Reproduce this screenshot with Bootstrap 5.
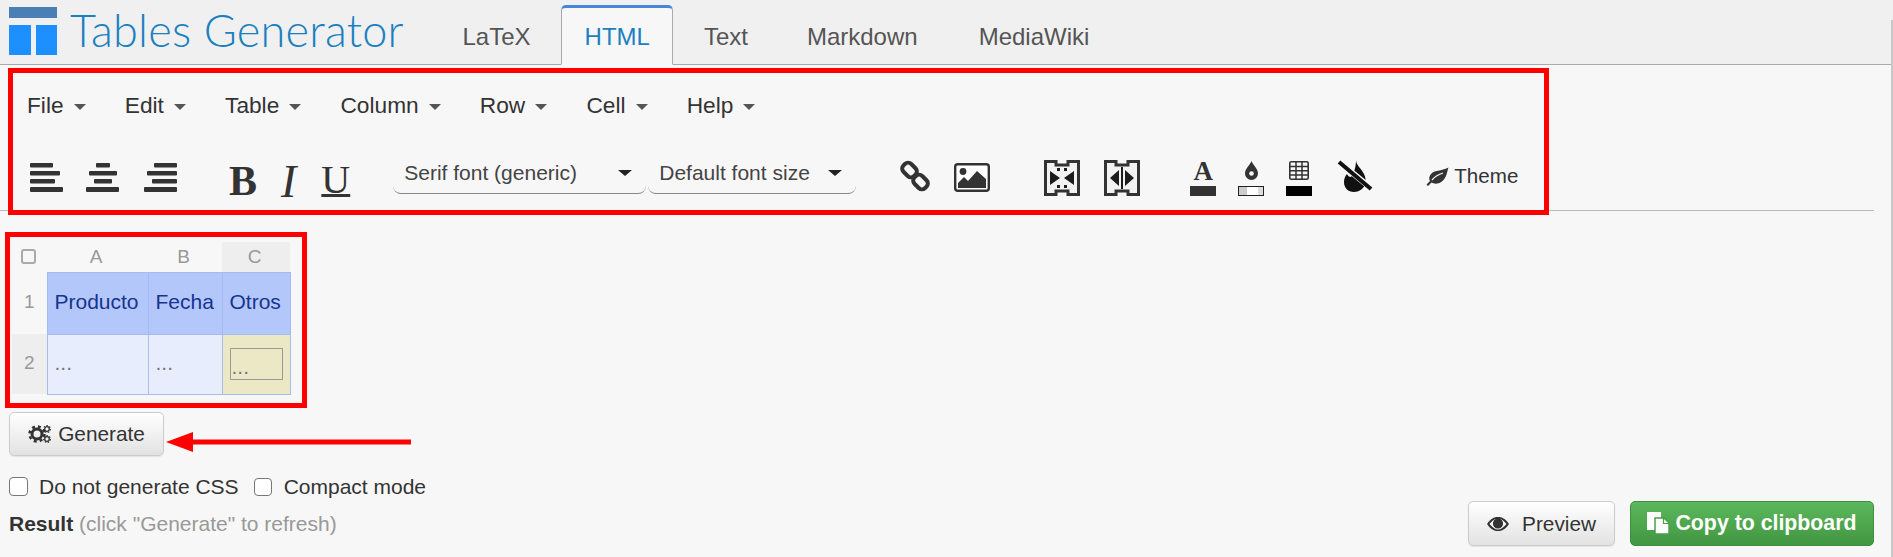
<!doctype html>
<html lang="en">
<head>
<meta charset="utf-8">
<title>Tables Generator</title>
<link href="https://cdn.jsdelivr.net/npm/bootstrap@5.3.0/dist/css/bootstrap.min.css" rel="stylesheet">
<style>
html,body{height:557px;overflow:hidden}
body{background:#f0f0f0;font-family:"Liberation Sans",Arial,sans-serif;color:#333;font-size:21px}
.shell{height:557px}
.edge{width:2px;margin-top:20px;background:#c8c8c8;flex:none}
.pane{flex:1 1 auto;background:#f7f7f7;min-width:0;position:relative;overflow:hidden}
.topbar{height:65px;background:#f0f0f0;border-bottom:1px solid #aaa;padding-left:9px}
.logo-svg{width:49px;height:48px;margin-top:7px;flex:none}
.brand{font-family:Lato,sans-serif;font-weight:300;font-size:45.1px;line-height:48px;color:#1b80c0;margin:6px 0 0 12px;width:335px;white-space:nowrap;letter-spacing:.2px}
.tabrow{margin-left:33px;gap:6px;height:65px}
.tabitem{font-size:24px;color:#555;padding:0 23.5px;height:60px;margin-top:5px;line-height:57px;border:1px solid transparent;border-top-width:3px;margin-bottom:-1px;white-space:nowrap}
.tabitem.on{background:#f7f7f7;color:#1b80c0;border-color:#4a86d8 #aaa #f7f7f7;border-radius:5px 5px 0 0;height:60px;padding:0 22.5px}
.tab-md{margin-left:4px}.tab-mw{margin-left:6px}
.tools{height:146px;border-bottom:1px solid #bbb;margin-right:17px;padding-left:27px;position:relative}
.menuline{height:80px;gap:39.2px;font-size:22.7px;color:#333}
.menuline .dropdown-toggle::after{margin-left:10px;border-top:6px solid #555;border-right:6px solid transparent;border-left:6px solid transparent;border-bottom:0;vertical-align:3px}
.iconline{height:44px;margin:15px 0 0 3px}
.ink{color:#333;display:block;flex:none}
.alg{width:33px;height:29px;margin-top:3px}
.m-alg{margin-left:23px}.m-alg2{margin-left:25px}
.gl{font-family:"Liberation Serif",serif;font-size:42px;line-height:44px;color:#333;margin-top:-1px}
.gl-b{font-weight:700;margin-left:52px}
.gl-i{font-style:italic;margin-left:24px;font-size:46px;line-height:40px;margin-top:2px}
.gl-u{margin-left:25px;text-decoration:underline;text-decoration-thickness:2.5px;text-underline-offset:1px;font-size:40px;line-height:42px}
.pick{height:34px;font-size:21px;line-height:26px;border-bottom:1px solid #888;border-radius:0 0 8px 8px;padding:0 14px 7px 11px;color:#444;margin-top:0}
.pick-a{width:253px;margin-left:43px}
.pick-b{width:208px;margin-left:2px}
.arrowdown{width:0;height:0;border-top:6px solid #222;border-left:7px solid transparent;border-right:7px solid transparent}
.chain{width:32px;height:32px;margin-left:43px}
.pic{width:36px;height:29px;margin-left:23px;margin-top:3px}
.frame{width:36px;height:36px}
.m-merge{margin-left:54px}.m-split{margin-left:24px}
.swatchbox{width:26px;height:36px}
.swatch{height:10px;width:26px;margin-top:auto}
.sw-a{background:#333}
.sw-b{border:1px solid #222;background:linear-gradient(90deg,#ccc 0 35%,#fff 35% 80%,#ddd 80%)}
.sw-c{background:#000}
.m-sw1{margin-left:50px}.m-sw2{margin-left:22px}
.letter-a{font-family:"Liberation Serif",serif;font-weight:700;font-size:27px;line-height:22px;text-align:center;color:#333}
.dropico{width:13px;height:19px;margin:1px auto 0}
.gridico{width:20px;height:19px;margin:1px auto 0}
.flame{width:37px;height:32px;margin-left:25px;margin-top:0}
.theme{margin-left:52px;font-size:20.6px;gap:5px;margin-top:1px}
.leaf{width:23px;height:19px}
.redbox{position:absolute;border:5px solid #f00;pointer-events:none}
.rb-tools{left:8px;top:68px;width:1541px;height:147px}
.tablewrap{margin:21px 0 0 5px;width:302px;height:176px;border:5px solid #f00;padding:5px 0 0 2px}
.sheet{table-layout:fixed;width:278px;border-collapse:collapse;font-size:21px}
.sheet th{font-weight:400;color:#999;text-align:center;padding:0}
.sheet .hd{height:30px;font-size:19px;padding-right:3px}
.sheet .rowh{font-size:19px;padding-bottom:2px}
.sheet .act{background:#eee}
.sheet td{border:1px solid #a8bde8;padding:0 0 3px 7px;white-space:nowrap}
.sheet .r1{height:62px;background:#b4c7fb;color:#15358f;border-color:#a4baf2}
.sheet .r2{height:60px;background:#e7edfd;color:#777}
.sheet .sel{background:#ece8c6;padding:0 7px;color:#777}
.selbox{border:1px solid #999;height:32px;line-height:36px;padding-left:1px}
.corner{width:15px;height:15px;border:2px solid #aaa;border-radius:3px;display:inline-block;vertical-align:-1px}
.genrow{margin:4px 0 0 9px}
.grad{background:linear-gradient(#fff,#e2e2e2);border:1px solid #ccc;color:#333;font-size:20.8px;border-radius:5px;box-shadow:0 1px 1px rgba(0,0,0,.08);height:43px;padding:0;display:flex;align-items:center;justify-content:center}
.gen{width:155px;gap:7px;height:44px}
.gears{width:23px;height:20px}
.redarrow{width:246px;height:20px;margin:20px 0 0 2px}
.opts{margin:21px 0 0 9px;height:19px}
.tick{width:19px;height:19px;border:1.5px solid #777;border-radius:4px;margin:0;background:#fff;flex:none;appearance:none;display:block}
.optlabel{font-size:21px;line-height:19px;white-space:nowrap;color:#333}
.tl1{margin-left:11px}.tick2{margin-left:15px;width:18px;height:18px}.tl2{margin-left:12px}
.resultrow{margin:5px 17px 0 9px;height:45px}
.muted-note{color:#999;font-weight:400}
.res{font-size:21px}
.prev{width:147px;height:45px;gap:13px}
.eye{width:22px;height:14px}
.copy{width:244px;height:45px;margin-left:15px;background:linear-gradient(#5cb85c,#419641);border:1px solid #3e8f3e;color:#fff;font-weight:700;font-size:21.3px;border-radius:5px;gap:5px;padding:0}
.copyico{width:23px;height:23px}
</style>
</head>
<body>
<div class="shell d-flex">
<div class="pane">
  <header class="topbar d-flex">
    <svg class="logo-svg" viewBox="0 0 49 48"><rect x="0" y="0" width="48" height="11" fill="#4a7fb5"/><rect x="0" y="18" width="22" height="30" fill="#1e8fff"/><rect x="27" y="18" width="21" height="30" fill="#1e8fff"/></svg>
    <div class="brand">Tables Generator</div>
    <nav class="tabrow d-flex">
      <div class="tabitem">LaTeX</div>
      <div class="tabitem on">HTML</div>
      <div class="tabitem">Text</div>
      <div class="tabitem tab-md">Markdown</div>
      <div class="tabitem tab-mw">MediaWiki</div>
    </nav>
  </header>

  <section class="tools">
    <div class="menuline d-flex align-items-center">
      <span class="dropdown-toggle">File</span>
      <span class="dropdown-toggle">Edit</span>
      <span class="dropdown-toggle">Table</span>
      <span class="dropdown-toggle">Column</span>
      <span class="dropdown-toggle">Row</span>
      <span class="dropdown-toggle">Cell</span>
      <span class="dropdown-toggle">Help</span>
    </div>
    <div class="iconline d-flex align-items-start">
      <svg class="ink alg" viewBox="0 0 33 29" fill="currentColor"><rect y="0" width="23" height="4.5" rx="1"/><rect y="8" width="30" height="4.5" rx="1"/><rect y="16" width="25" height="4.5" rx="1"/><rect y="24" width="33" height="5" rx="1"/></svg>
      <svg class="ink alg m-alg" viewBox="0 0 33 29" fill="currentColor"><rect x="10" y="0" width="14" height="4.5" rx="1"/><rect x="3" y="8" width="28" height="4.5" rx="1"/><rect x="8" y="16" width="18" height="4.5" rx="1"/><rect y="24" width="33" height="5" rx="1"/></svg>
      <svg class="ink alg m-alg2" viewBox="0 0 33 29" fill="currentColor"><rect x="10" y="0" width="23" height="4.5" rx="1"/><rect x="3" y="8" width="30" height="4.5" rx="1"/><rect x="8" y="16" width="25" height="4.5" rx="1"/><rect y="24" width="33" height="5" rx="1"/></svg>
      <span class="gl gl-b">B</span>
      <span class="gl gl-i">I</span>
      <span class="gl gl-u">U</span>
      <div class="pick pick-a d-flex justify-content-between align-items-center"><span>Serif font (generic)</span><i class="arrowdown"></i></div>
      <div class="pick pick-b d-flex justify-content-between align-items-center"><span>Default font size</span><i class="arrowdown"></i></div>
      <svg class="ink chain" viewBox="0 0 32 32" fill="none" stroke="currentColor" stroke-width="4"><rect x="3" y="4.500" width="15" height="11" rx="4.500" transform="rotate(45 10.500 10)"/><rect x="14" y="16.500" width="15" height="11" rx="4.500" transform="rotate(45 21.500 22)"/></svg>
      <svg class="ink pic" viewBox="0 0 36 29"><rect x="1.2" y="1.2" width="33.6" height="26.6" rx="2.5" fill="#fff" stroke="currentColor" stroke-width="2.4"/><circle cx="9" cy="8.5" r="3.4" fill="currentColor"/><path d="M4 25v-5l6-6 4 4 9-10 9 8v9z" fill="currentColor"/></svg>
      <svg class="ink frame m-merge" viewBox="0 0 36 36"><path d="M1.5 1.5H12V5H24V1.5H34.5V34.5H24V31H12V34.5H1.5Z" fill="#f2f2f2" stroke="currentColor" stroke-width="3"/><path d="M6 11l10 7-10 7zM30 11l-10 7 10 7z" fill="#1c1c1c"/><path d="M13 8h3v3h-3zM20 8h3v3h-3zM13 25h3v3h-3zM20 25h3v3h-3z" fill="#1c1c1c"/></svg>
      <svg class="ink frame m-split" viewBox="0 0 36 36"><path d="M1.5 1.5H12V5H24V1.5H34.5V34.5H24V31H12V34.5H1.5Z" fill="#f2f2f2" stroke="currentColor" stroke-width="3"/><path d="M15 10v16L6 18zM21 10v16l9-8z" fill="#1c1c1c"/><rect x="17" y="7" width="2" height="22" fill="#1c1c1c"/></svg>
      <div class="swatchbox d-flex flex-column m-sw1"><div class="letter-a">A</div><div class="swatch sw-a"></div></div>
      <div class="swatchbox d-flex flex-column m-sw2"><svg class="ink dropico" viewBox="0 0 13 19"><path d="M6.5 0C8 4 13 7.500 13 12.500A6.500 6.500 0 0 1 0 12.500C0 7.500 5 4 6.500 0z" fill="currentColor"/><circle cx="6.500" cy="12.500" r="2.300" fill="#f7f7f7"/></svg><div class="swatch sw-b"></div></div>
      <div class="swatchbox d-flex flex-column m-sw2"><svg class="ink gridico" viewBox="0 0 20 19" fill="none" stroke="currentColor" stroke-width="1.500"><rect x=".8" y=".8" width="18.400" height="17.400" rx="1.500" stroke-width="1.600"/><path d="M.8 5.500h18.400M.8 9.700h18.400M.8 14h18.400M7 .8v17.400M13 .8v17.400"/></svg><div class="swatch sw-c"></div></div>
      <svg class="flame" viewBox="0 0 37 32"><path d="M19 0c0 5 5 8 8 14 2 4 2 8 1 11-2 4-6 7-11 7-6 0-10-4-10-10 0-3 1-6 3-8 1 2 2 3 4 3 3-4 5-10 5-17z" fill="#111"/><path d="M1 1l34 28" stroke="#f7f7f7" stroke-width="6"/><path d="M2 2l32 27" stroke="#111" stroke-width="4"/></svg>
      <div class="theme d-flex align-items-center"><svg class="ink leaf" viewBox="0 0 23 19"><path d="M22.500 0.500C17 4 9 2.500 5 7c-2 2.300-2.200 5-1 7L.5 17.500 2 19l3.500-3.500c3 2 8 1.500 11.500-2 4-4 4-9 5.500-13z" fill="currentColor"/><path d="M6 13c3-3.500 6-5.500 11-7" stroke="#f7f7f7" stroke-width="1.200" fill="none"/></svg><span>Theme</span></div>
    </div>
  </section>
  <div class="redbox rb-tools"></div>

  <div class="tablewrap">
    <table class="sheet">
      <colgroup><col style="width:35px"><col style="width:101px"><col style="width:74px"><col style="width:68px"></colgroup>
      <tr><th class="hd"><span class="corner"></span></th><th class="hd">A</th><th class="hd">B</th><th class="hd act">C</th></tr>
      <tr><th class="rowh">1</th><td class="r1">Producto</td><td class="r1">Fecha</td><td class="r1">Otros</td></tr>
      <tr><th class="rowh act">2</th><td class="r2">...</td><td class="r2">...</td><td class="r2 sel"><div class="selbox">...</div></td></tr>
    </table>
  </div>

  <div class="genrow d-flex align-items-start">
    <button type="button" class="btn grad gen">
      <svg class="gears" viewBox="0 0 23 20" fill="none" stroke="#333"><circle cx="9" cy="10" r="5" stroke-width="3"/><circle cx="9" cy="10" r="7.500" stroke-width="2.600" stroke-dasharray="3 3"/><circle cx="19" cy="5" r="2.300" stroke-width="1.300"/><circle cx="19" cy="5" r="3.400" stroke-width="1.200" stroke-dasharray="1.500 1.500"/><circle cx="19" cy="15" r="2.300" stroke-width="1.300"/><circle cx="19" cy="15" r="3.400" stroke-width="1.200" stroke-dasharray="1.500 1.500"/></svg>
      <span>Generate</span>
    </button>
    <svg class="redarrow" viewBox="0 0 246 20"><path d="M0 10L27 0V7.500H245V12.500H27V20z" fill="#f00"/></svg>
  </div>

  <div class="opts d-flex align-items-center">
    <input class="tick" type="checkbox" aria-label="Do not generate CSS"><span class="optlabel tl1">Do not generate CSS</span>
    <input class="tick tick2" type="checkbox" aria-label="Compact mode"><span class="optlabel tl2">Compact mode</span>
  </div>

  <div class="resultrow d-flex justify-content-between align-items-center">
    <div class="res"><strong>Result</strong> <span class="muted-note">(click "Generate" to refresh)</span></div>
    <div class="d-flex">
      <button type="button" class="btn grad prev">
        <svg class="eye" viewBox="0 0 22 14"><path d="M0 7C4 1.500 7 0 11 0s7 1.500 11 7c-4 5.500-7 7-11 7S4 12.500 0 7z" fill="#333"/><path d="M2.500 7C5 4 7 2.500 9 2a5 5 0 1 0 4 0c2 .5 4 2 6.500 5-3 3.500-5.500 5.500-8.500 5.500S5.500 10.500 2.500 7z" fill="#f4f4f4"/><circle cx="11" cy="6.500" r="4.500" fill="#333"/></svg>
        <span>Preview</span>
      </button>
      <button type="button" class="btn copy d-flex align-items-center justify-content-center">
        <svg class="copyico" viewBox="0 0 23 23"><rect x="0" y="0" width="14" height="18" fill="#fff"/><path d="M8 6h9l5 5v11H8z" fill="#fff" stroke="#4aa04a" stroke-width="1.500"/><path d="M16.500 6v5.500H22" fill="none" stroke="#4aa04a" stroke-width="1.200"/></svg>
        <span>Copy to clipboard</span>
      </button>
    </div>
  </div>
</div>
<div class="edge"></div>
</div>
<script src="https://cdn.jsdelivr.net/npm/bootstrap@5.3.0/dist/js/bootstrap.bundle.min.js"></script>
</body>
</html>
